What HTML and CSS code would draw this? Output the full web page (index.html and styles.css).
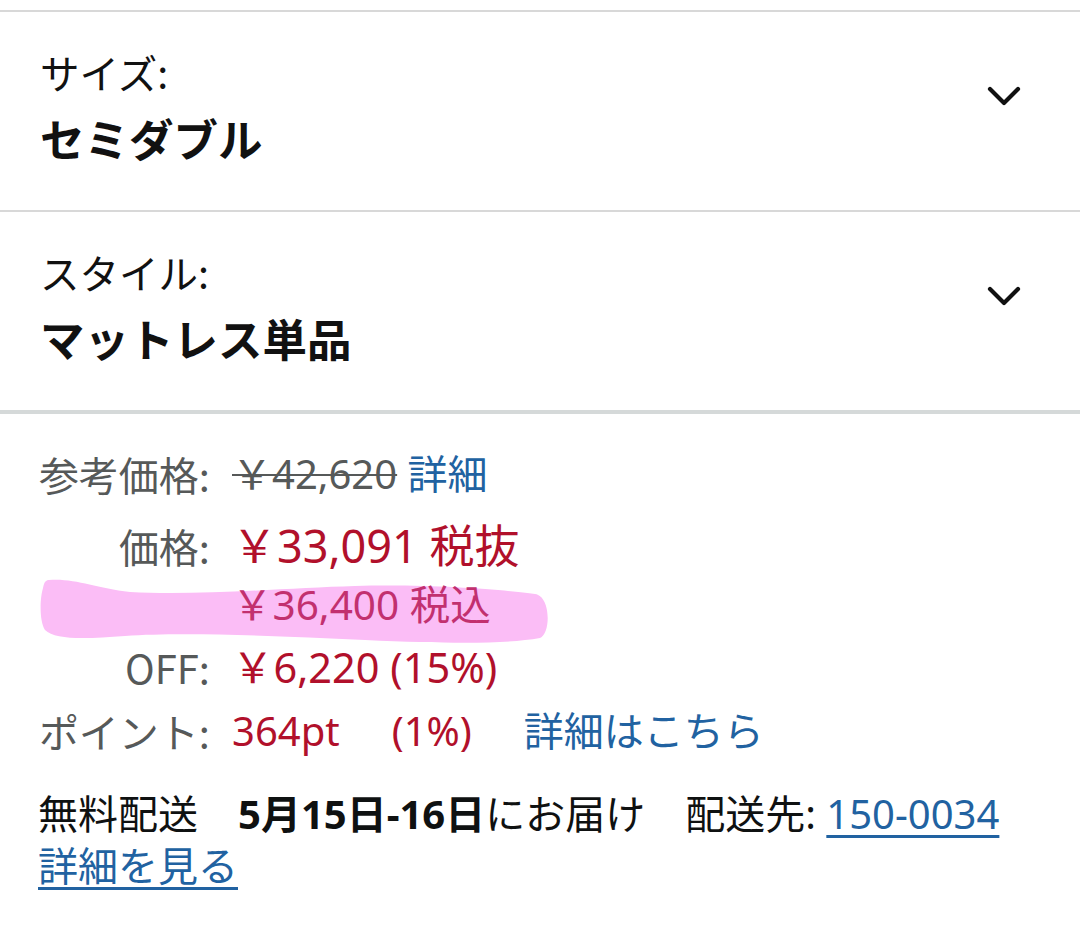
FILE: index.html
```html
<!DOCTYPE html>
<html lang="ja">
<head>
<meta charset="utf-8">
<link rel="stylesheet" href="styles.css">
</head>
<body>
<div class="page">
  <div class="selector first">
    <div class="sel-text">
      <div class="sel-label">サイズ:</div>
      <div class="sel-value">セミダブル</div>
    </div>
    <svg class="chev" width="36" height="24" viewBox="0 0 36 24"><path d="M4 4 L18 18 L32 4" fill="none" stroke="#111" stroke-width="4.2" stroke-linecap="round" stroke-linejoin="round"/></svg>
  </div>
  <div class="selector">
    <div class="sel-text">
      <div class="sel-label">スタイル:</div>
      <div class="sel-value">マットレス単品</div>
    </div>
    <svg class="chev" width="36" height="24" viewBox="0 0 36 24"><path d="M4 4 L18 18 L32 4" fill="none" stroke="#111" stroke-width="4.2" stroke-linecap="round" stroke-linejoin="round"/></svg>
  </div>
  <div class="prices">
    <svg class="highlight" width="520" height="76" viewBox="0 0 520 76"><path d="M14 6 C40 4 60 14 95 18 C160 22 250 14 320 12 C400 10 470 16 500 20 C516 22 516 60 505 64 C470 70 420 70 330 66 C240 62 150 58 90 62 C50 65 20 66 10 56 C4 46 5 24 8 14 C9 8 11 6 14 6 Z" fill="#fbbdf6"/></svg>
    <div class="grid">
      <div class="lbl r1">参考価格:</div>
      <div class="val r1"><span class="strike">￥42,620</span> <span class="link">詳細</span></div>
      <div class="lbl r2">価格:</div>
      <div class="val r2 red big">￥33,091 税抜</div>
      <div class="lbl r3"></div>
      <div class="val r3 pinkred sub">￥36,400 税込</div>
      <div class="lbl r4">OFF:</div>
      <div class="val r4 red mid">￥6,220 (15%)</div>
      <div class="lbl r5">ポイント:</div>
      <div class="val r5"><span class="red pt">364pt</span><span class="red pct">(1%)</span><span class="link">詳細はこちら</span></div>
    </div>
    <div class="delivery">
      <div class="dline">無料配送　<b>5月15日-16日</b>にお届け　配送先: <span class="ulink">150-0034</span></div>
      <div class="dline"><span class="ulink">詳細を見る</span></div>
    </div>
  </div>
</div>
</body>
</html>
```
FILE: styles.css
```css
html, body {
  margin: 0;
  padding: 0;
  background: #fff;
}
body {
  font-family: "Noto Sans", "Noto Sans CJK JP", sans-serif;
  color: #0f1111;
}
.page {
  width: 1080px;
  padding-top: 10px;
}
.selector {
  display: flex;
  justify-content: space-between;
  align-items: flex-start;
  border-top: 2px solid #d8d8d8;
  padding: 35px 58px 37px 40px;
  height: 126px;
}
.sel-label {
  font-size: 39.5px;
  line-height: 50px;
  font-family: "Noto Sans CJK JP", sans-serif;
  color: #111;
}
.sel-value {
  font-size: 44.5px;
  line-height: 70px;
  margin-top: 6px;
  font-weight: 700;
  font-family: "Noto Sans CJK JP", sans-serif;
  color: #111;
}
.chev {
  margin-top: 38px;
  display: block;
}
.prices {
  position: relative;
  border-top: 4px solid #d5d9d9;
  padding: 25px 40px 0 38px;
}
.highlight {
  position: absolute;
  left: 35px;
  top: 160px;
}
.grid {
  position: relative;
  display: grid;
  grid-template-columns: 172px auto;
  column-gap: 22px;
  font-size: 40px;
  justify-content: start;
}
.lbl {
  text-align: right;
  color: #565959;
  font-family: "Noto Sans CJK JP", sans-serif;
}
.val {
  white-space: nowrap;
}
.r1 { line-height: 70px; }
.r2 { line-height: 74px; }
.r3 { line-height: 44px; }
.r4 { line-height: 80px; }
.r5 { line-height: 48px; }
.strike {
  color: #565959;
  text-decoration: line-through;
  text-decoration-thickness: 2px;
}
.link {
  color: #2162a1;
}
.red {
  color: #b1102b;
}
.big {
  font-size: 45px;
}
.mid {
  font-size: 41.5px;
}
.sub {
  font-size: 40.5px;
}
.pinkred {
  color: #c2306f;
}
.pt {
  margin-right: 52px;
}
.pct {
  margin-right: 52px;
}
.delivery {
  margin-top: 33px;
  font-size: 40px;
  line-height: 52px;
}
.dline {
  white-space: nowrap;
}
.dline b {
  font-weight: 700;
}
.ulink {
  color: #2162a1;
  text-decoration: underline;
  text-decoration-thickness: 3px;
  text-underline-offset: 6px;
}
```
